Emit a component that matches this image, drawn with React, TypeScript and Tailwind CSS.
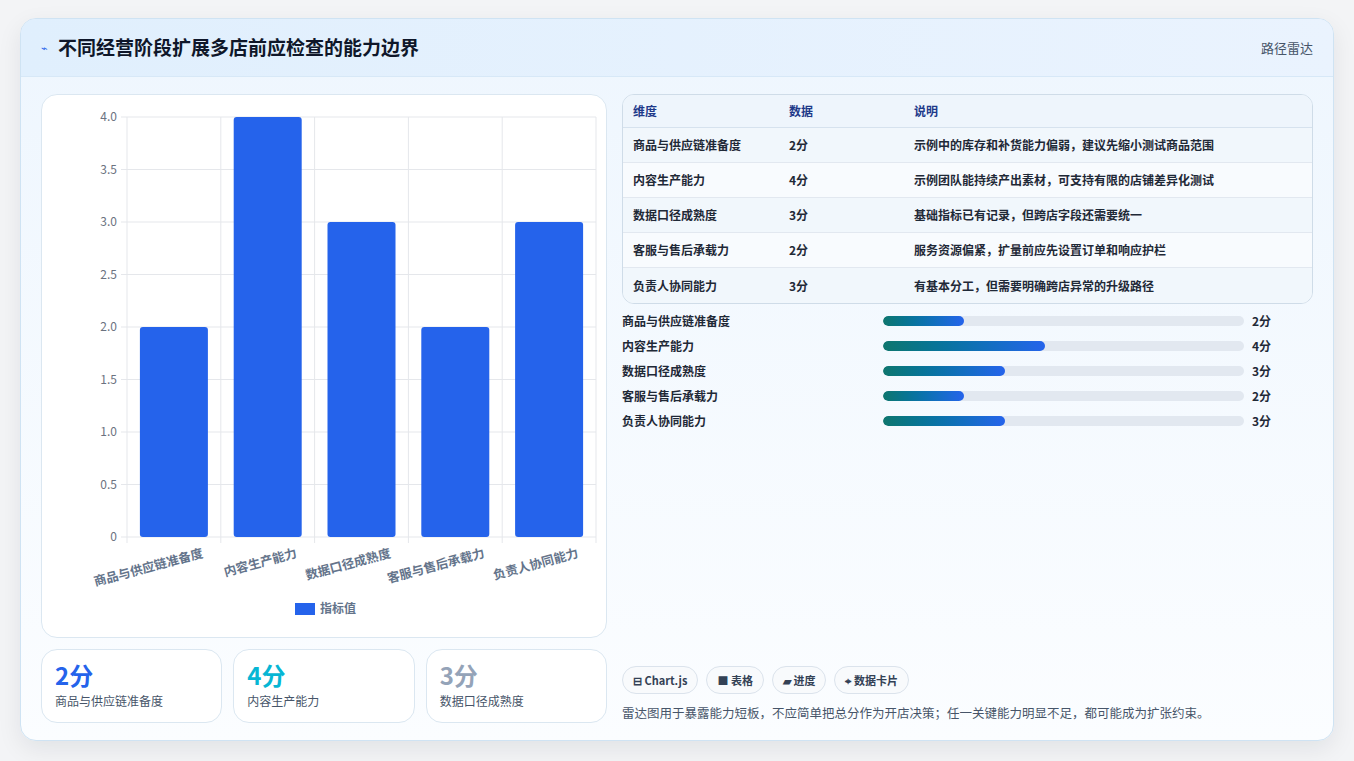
import React from 'react'

const rows = [
  { name: '商品与供应链准备度', v: 2, note: '示例中的库存和补货能力偏弱，建议先缩小测试商品范围' },
  { name: '内容生产能力', v: 4, note: '示例团队能持续产出素材，可支持有限的店铺差异化测试' },
  { name: '数据口径成熟度', v: 3, note: '基础指标已有记录，但跨店字段还需要统一' },
  { name: '客服与售后承载力', v: 2, note: '服务资源偏紧，扩量前应先设置订单和响应护栏' },
  { name: '负责人协同能力', v: 3, note: '有基本分工，但需要明确跨店异常的升级路径' },
]

function Chart() {
  // plot area in svg coords (svg origin at card 40,93)
  const x0 = 85, x1 = 554, yTop = 22, yBot = 442
  const colW = (x1 - x0) / 5
  const ticks = [0, 0.5, 1, 1.5, 2, 2.5, 3, 3.5, 4]
  const y = (v: number) => yBot - (v / 4) * (yBot - yTop)
  return (
    <svg width="566" height="543" className="block">
      {ticks.map((t) => (
        <g key={t}>
          <line x1={x0 - 6} x2={x1} y1={y(t)} y2={y(t)} stroke="#e5e7eb" />
          <text x={x0 - 10} y={y(t) + 4} textAnchor="end" fontSize="12" fill="#6b7280">
            {t === 0 ? '0' : t.toFixed(1)}
          </text>
        </g>
      ))}
      {[0, 1, 2, 3, 4, 5].map((i) => (
        <line key={i} x1={x0 + i * colW} x2={x0 + i * colW} y1={yTop} y2={yBot + 6} stroke="#e5e7eb" />
      ))}
      {rows.map((r, i) => {
        const cx = x0 + i * colW + colW / 2
        return (
          <g key={r.name}>
            <rect x={cx - 34} y={y(r.v)} width="68" height={yBot - y(r.v)} rx="3" fill="#2563eb" />
            <text
              x={cx + 30}
              y={yBot + 20}
              textAnchor="end"
              fontSize="12.5"
              fontWeight="600"
              fill="#64748b"
              transform={`rotate(-15 ${cx + 30} ${yBot + 20})`}
            >
              {r.name}
            </text>
          </g>
        )
      })}
      <rect x="253" y="508" width="20" height="12" fill="#2563eb" />
      <text x="278" y="518" fontSize="12" fontWeight="600" fill="#64748b">指标值</text>
    </svg>
  )
}

export default function App() {
  return (
    <div
      className="min-h-[761px] w-full bg-[#f3f4f6] px-5 pt-[18px]"
      style={{ fontFamily: '"Noto Sans CJK SC", "Noto Sans", sans-serif' }}
    >
      <div className="w-[1314px] h-[723px] rounded-2xl border border-[#cfe3f3] bg-gradient-to-b from-[#eef6fe] to-[#fbfdff] shadow-[0_8px_24px_rgba(15,23,42,0.08)] overflow-hidden flex flex-col">
        <div className="h-[58px] shrink-0 flex items-center justify-between px-5 bg-gradient-to-r from-[#e0effd] to-[#eaf3fe] border-b border-[#d7e8f7]">
          <div className="flex items-center gap-2.5">
            <span className="text-[#2563eb] text-[11px]">⌁</span>
            <h1 className="text-[19px] font-bold text-[#0f172a]">不同经营阶段扩展多店前应检查的能力边界</h1>
          </div>
          <span className="text-[13px] text-[#475569]">路径雷达</span>
        </div>
        <div className="flex gap-[15px] px-5 pt-[17px] pb-[18px] flex-1">
          <div className="w-[566px] flex flex-col gap-[11px]">
            <div className="h-[544px] rounded-2xl border border-[#dbe7f1] bg-white">
              <Chart />
            </div>
            <div className="flex gap-[11px]">
              {[
                { v: '2分', l: '商品与供应链准备度', c: 'text-[#2563eb]' },
                { v: '4分', l: '内容生产能力', c: 'text-[#06b6d4]' },
                { v: '3分', l: '数据口径成熟度', c: 'text-[#94a3b8]' },
              ].map((s) => (
                <div key={s.l} className="w-[182px] h-[74px] rounded-2xl border border-[#dbe7f1] bg-white px-[13px] pt-[10px]">
                  <div className={`text-[24px] font-bold leading-[30px] ${s.c}`}>{s.v}</div>
                  <div className="text-[12px] text-[#475569] mt-0.5">{s.l}</div>
                </div>
              ))}
            </div>
          </div>
          <div className="flex-1 flex flex-col">
            <div className="rounded-xl border border-[#cfdce8] overflow-hidden bg-[#f5f9fd]">
              <div className="flex h-[33px] items-center text-[12px] font-bold text-[#1e3a8a] border-b border-[#d6e2ee] bg-[#eef5fc]">
                <div className="w-[166px] pl-2.5">维度</div>
                <div className="w-[125px]">数据</div>
                <div>说明</div>
              </div>
              {rows.map((r, i) => (
                <div
                  key={r.name}
                  className={`flex h-[35px] items-center text-[12px] font-semibold text-[#1f2937] ${i < 4 ? 'border-b border-[#e2e8f0]' : ''} ${i % 2 === 0 ? 'bg-[#f1f7fc]' : 'bg-[#f8fbfe]'}`}
                >
                  <div className="w-[166px] pl-2.5">{r.name}</div>
                  <div className="w-[125px]">{r.v}分</div>
                  <div>{r.note}</div>
                </div>
              ))}
            </div>
            <div className="mt-[11px] flex flex-col gap-[13px]">
              {rows.map((r) => (
                <div key={r.name} className="flex items-center h-[12px]">
                  <div className="w-[261px] text-[12px] font-semibold text-[#1f2937]">{r.name}</div>
                  <div className="w-[361px] h-[10px] rounded-full bg-[#e2e8f0] overflow-hidden">
                    <div
                      className="h-full rounded-full bg-gradient-to-r from-[#0f766e] to-[#2563eb]"
                      style={{ width: `${r.v * 11.25}%` }}
                    />
                  </div>
                  <div className="ml-2 text-[12px] font-bold text-[#1f2937]">{r.v}分</div>
                </div>
              ))}
            </div>
            <div className="mt-auto">
              <div className="flex gap-2">
                {['⊟ Chart.js', '■ 表格', '▰ 进度', '⌖ 数据卡片'].map((t) => (
                  <span key={t} className="h-[28px] px-2.5 flex items-center rounded-full border border-[#dbe3ec] bg-[#f8fafc] text-[11px] font-bold text-[#334155]">
                    {t}
                  </span>
                ))}
              </div>
              <p className="mt-[9px] text-[12.5px] text-[#475569] leading-5">
                雷达图用于暴露能力短板，不应简单把总分作为开店决策；任一关键能力明显不足，都可能成为扩张约束。
              </p>
            </div>
          </div>
        </div>
      </div>
    </div>
  )
}
